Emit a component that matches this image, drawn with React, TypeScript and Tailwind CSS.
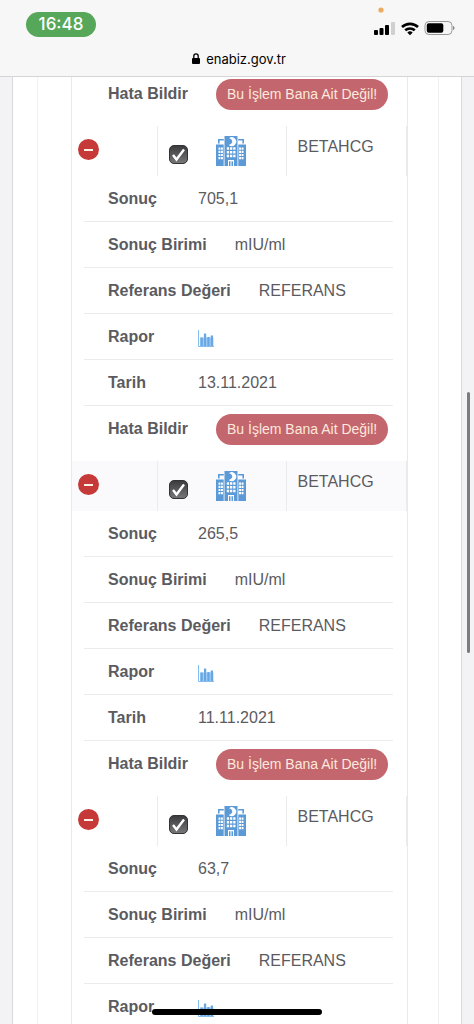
import React, { useState } from 'react'

interface LabResult {
  id: number
  name: string
  value: string
  unit: string
  reference: string
  date?: string
}

const RESULTS: LabResult[] = [
  { id: 1, name: 'BETAHCG', value: '705,1', unit: 'mIU/ml', reference: 'REFERANS', date: '13.11.2021' },
  { id: 2, name: 'BETAHCG', value: '265,5', unit: 'mIU/ml', reference: 'REFERANS', date: '11.11.2021' },
  { id: 3, name: 'BETAHCG', value: '63,7', unit: 'mIU/ml', reference: 'REFERANS' },
]

function HospitalIcon() {
  return (
    <svg width="30" height="30" viewBox="0 0 30 30" aria-hidden="true">
      <path fill="#5b9ad6" d="M8.500 0h13v30h-13zM0 8.500h7.700V30H0zM22.300 8.500H30V30h-7.700z" />
      <path fill="none" stroke="#5b9ad6" strokeWidth="1.600" d="M2.800 7.500V3.800h5M27.200 7.500V3.800h-5" />
      {/* crescent */}
      <path fill="#fff" d="M13 2.300a4.400 4.400 0 1 1-.3 6.600a4.200 4.200 0 0 0 3.600-2.600a4 4 0 0 0-3.300-4z" />
      {/* windows */}
      <g fill="#fff">
        <path d="M10.800 11.200h2.300v2.500h-2.300zM14 11.200h2.300v2.500H14zM17.200 11.200h2.300v2.500h-2.300zM10.800 15h2.300v2.500h-2.300zM14 15h2.300v2.500H14zM17.200 15h2.300v2.500h-2.300zM10.800 18.800h2.300v2.500h-2.300zM14 18.800h2.300v2.500H14zM17.200 18.800h2.300v2.500h-2.300z" />
        <path d="M2.500 11.500h1.900v2.200H2.500zM5 11.500h1.900v2.200H5zM2.500 14.700h1.900v2.200H2.500zM5 14.700h1.900v2.200H5zM2.500 17.900h1.900v2.200H2.500zM5 17.900h1.900v2.200H5zM2.500 21.100h1.900v2.200H2.500zM5 21.100h1.900v2.200H5z" />
        <path d="M23.100 11.500H25v2.200h-1.900zM25.600 11.500h1.900v2.200h-1.900zM23.100 14.700H25v2.200h-1.900zM25.600 14.700h1.900v2.200h-1.900zM23.100 17.900H25v2.200h-1.900zM25.600 17.900h1.900v2.200h-1.900zM23.100 21.100H25v2.200h-1.900zM25.600 21.100h1.900v2.200h-1.900z" />
        <path d="M12 24h6v6h-1v-4.800h-1.500V30h-1v-4.800H13V30h-1z" />
      </g>
    </svg>
  )
}

function ChartIcon() {
  return (
    <svg width="16" height="17" viewBox="0 0 16 17" aria-hidden="true">
      <path fill="none" stroke="#84bdf0" d="M.5 0v16.500H16" />
      <path fill="#a9d2f6" d="M2 7.500h13.500V16H2z" />
      <path fill="#68a7e3" d="M2.500 7.500h2.300V16H2.500zM5.900 3.500h2.300V16H5.900zM9.300 7h2.300v9H9.300zM12.700 5.500H15V16h-2.300z" />
    </svg>
  )
}

function StatusBar() {
  return (
    <header className="relative z-10 shrink-0 border-b border-[#d5d5d5] bg-[#f7f7f7] font-[Inter,sans-serif] text-black">
      <div className="flex h-12 items-center justify-between pr-[19px] pl-[26px]">
        <span className="flex h-[25px] w-[70px] items-center justify-center rounded-full bg-[#56a75a] text-[17px] font-medium text-white">16:48</span>
        <svg width="81" height="30" viewBox="0 0 81 30" className="mb-1" aria-hidden="true">
          <circle cx="7" cy="3" r="2.600" fill="#eeaa5d" />
          <rect x="0" y="23" width="4" height="5" rx="1" />
          <rect x="5.500" y="21" width="4" height="7" rx="1" />
          <rect x="11" y="18" width="4" height="10" rx="1" />
          <rect x="17" y="15" width="4" height="13" rx="1" fill="#d0d0d0" />
          <path fill="none" stroke="#000" strokeWidth="2.600" d="M28 20a11.700 11.700 0 0 1 16 0M31.200 23.300a7.200 7.200 0 0 1 9.600 0" />
          <path d="M33.300 25.500a4.200 4.200 0 0 1 5.400 0L36 28.200z" />
          <rect x="51" y="14.500" width="27" height="13" rx="4" fill="none" stroke="#999" />
          <rect x="52.800" y="16.300" width="16.500" height="9.400" rx="2" />
          <path fill="#888" d="M79 19c2 .6 2 3.500 0 4.100z" />
        </svg>
      </div>
      <div className="flex h-7 items-start justify-center gap-[6px] pl-1 text-[13px] leading-[22px]">
        <svg width="8" height="11" viewBox="0 0 8 11" className="mt-[5px]" aria-hidden="true">
          <path fill="none" stroke="#000" strokeWidth="1.300" d="M1.800 5.500V3a2.200 2.200 0 0 1 4.400 0v2.500" />
          <rect y="5" width="8" height="6" rx="1" />
        </svg>
        <span>enabiz.gov.tr</span>
      </div>
    </header>
  )
}

function DetailItem({ label, children }: { label: string, children: React.ReactNode }) {
  return (
    <li className="flex h-[46px] items-center gap-7 border-b border-[#ececec] pl-6">
      <span className="min-w-[62px] font-bold">{label}</span>
      <span>{children}</span>
    </li>
  )
}

function ReportError() {
  return (
    <div className="flex h-[47px] items-start gap-7 pl-6">
      <span className="min-w-[62px] leading-[30px] font-bold">Hata Bildir</span>
      <button type="button" className="h-[31px] rounded-full bg-[#c4666e] px-[11px] pb-[2px] text-[14px] text-[#fbe9dc]">
        Bu İşlem Bana Ait Değil!
      </button>
    </div>
  )
}

function ResultRows({ result, striped }: { result: LabResult, striped: boolean }) {
  const [open, setOpen] = useState(true)
  const [checked, setChecked] = useState(true)

  return (
    <>
      <tr className={striped ? 'h-[50px] bg-[#fafafc]' : 'h-[50px]'}>
        <td className="border-r border-[#ebebee] pl-[6px]">
          <button
            type="button"
            onClick={() => setOpen(!open)}
            aria-label="Detay"
            aria-expanded={open}
            className="mt-[-3px] flex h-[21px] w-[21px] items-center justify-center rounded-full bg-[#c53a38]"
          >
            <span className="h-[2px] w-[9px] bg-[#fff0e4]" />
          </button>
        </td>
        <td className="border-r border-[#ebebee] pl-[11px]">
          <div className="flex items-center gap-7">
            <span className="relative mt-[6px] h-[19px] w-[19px]">
              <input
                type="checkbox"
                aria-label={result.name}
                checked={checked}
                onChange={e => setChecked(e.target.checked)}
                className="block h-[19px] w-[19px] appearance-none rounded-[5px] border border-[#333] bg-linear-to-b from-[#3c3c3e] to-[#77777a]"
              />
              {checked && (
                <svg width="19" height="19" viewBox="0 0 19 19" className="pointer-events-none absolute inset-0" aria-hidden="true">
                  <path fill="none" stroke="#fff" strokeWidth="2.400" d="M4 10l3.500 4.500L15 4.500" />
                </svg>
              )}
            </span>
            <HospitalIcon />
          </div>
        </td>
        <td className="border-r border-[#ebebee] pt-[9px] pl-[11px] align-top">{result.name}</td>
      </tr>
      {open && (
        <tr>
          <td colSpan={3} className="pr-[14px] pl-3">
            <ul>
              <DetailItem label="Sonuç">{result.value}</DetailItem>
              <DetailItem label="Sonuç Birimi">{result.unit}</DetailItem>
              <DetailItem label="Referans Değeri">{result.reference}</DetailItem>
              <DetailItem label="Rapor">
                <a href="#rapor" aria-label="Rapor" className="block pt-[3px]"><ChartIcon /></a>
              </DetailItem>
              {result.date && (
                <>
                  <DetailItem label="Tarih">{result.date}</DetailItem>
                  <li className="pt-2"><ReportError /></li>
                </>
              )}
            </ul>
          </td>
        </tr>
      )}
    </>
  )
}

export default function App() {
  return (
    <div className="relative flex h-screen flex-col overflow-hidden bg-[#f3f3f6] font-['Liberation_Sans',sans-serif] text-[16px] leading-6 text-[#5b5b5f]">
      <StatusBar />
      <main className="mx-3 min-h-0 flex-1 overflow-hidden border-x border-[#d9d9dc] bg-white pr-[22px] pl-6">
        <div className="min-h-full border-x border-[#f1f1f3] pr-[30px] pl-[33px]">
          <div className="border-x border-[#e9e9ec]">
            <table className="w-full table-fixed border-collapse">
              <colgroup>
                <col className="w-[85px]" />
                <col className="w-[129px]" />
                <col />
              </colgroup>
              <tbody>
                {/* tail of the previous record */}
                <tr>
                  <td colSpan={3} className="pt-[2px] pr-[14px] pl-3"><ReportError /></td>
                </tr>
                {RESULTS.map((r, i) => (
                  <ResultRows key={r.id} result={r} striped={i % 2 === 1} />
                ))}
              </tbody>
            </table>
          </div>
        </div>
      </main>

      {/* page scroll position */}
      <div className="absolute top-[392px] right-1 z-20 h-[261px] w-[3px] rounded-full bg-[#7c7c80]" />
      {/* home indicator */}
      <div className="absolute bottom-[9px] left-1/2 z-20 h-[6px] w-[170px] -translate-x-1/2 rounded-full bg-black" />
    </div>
  )
}
